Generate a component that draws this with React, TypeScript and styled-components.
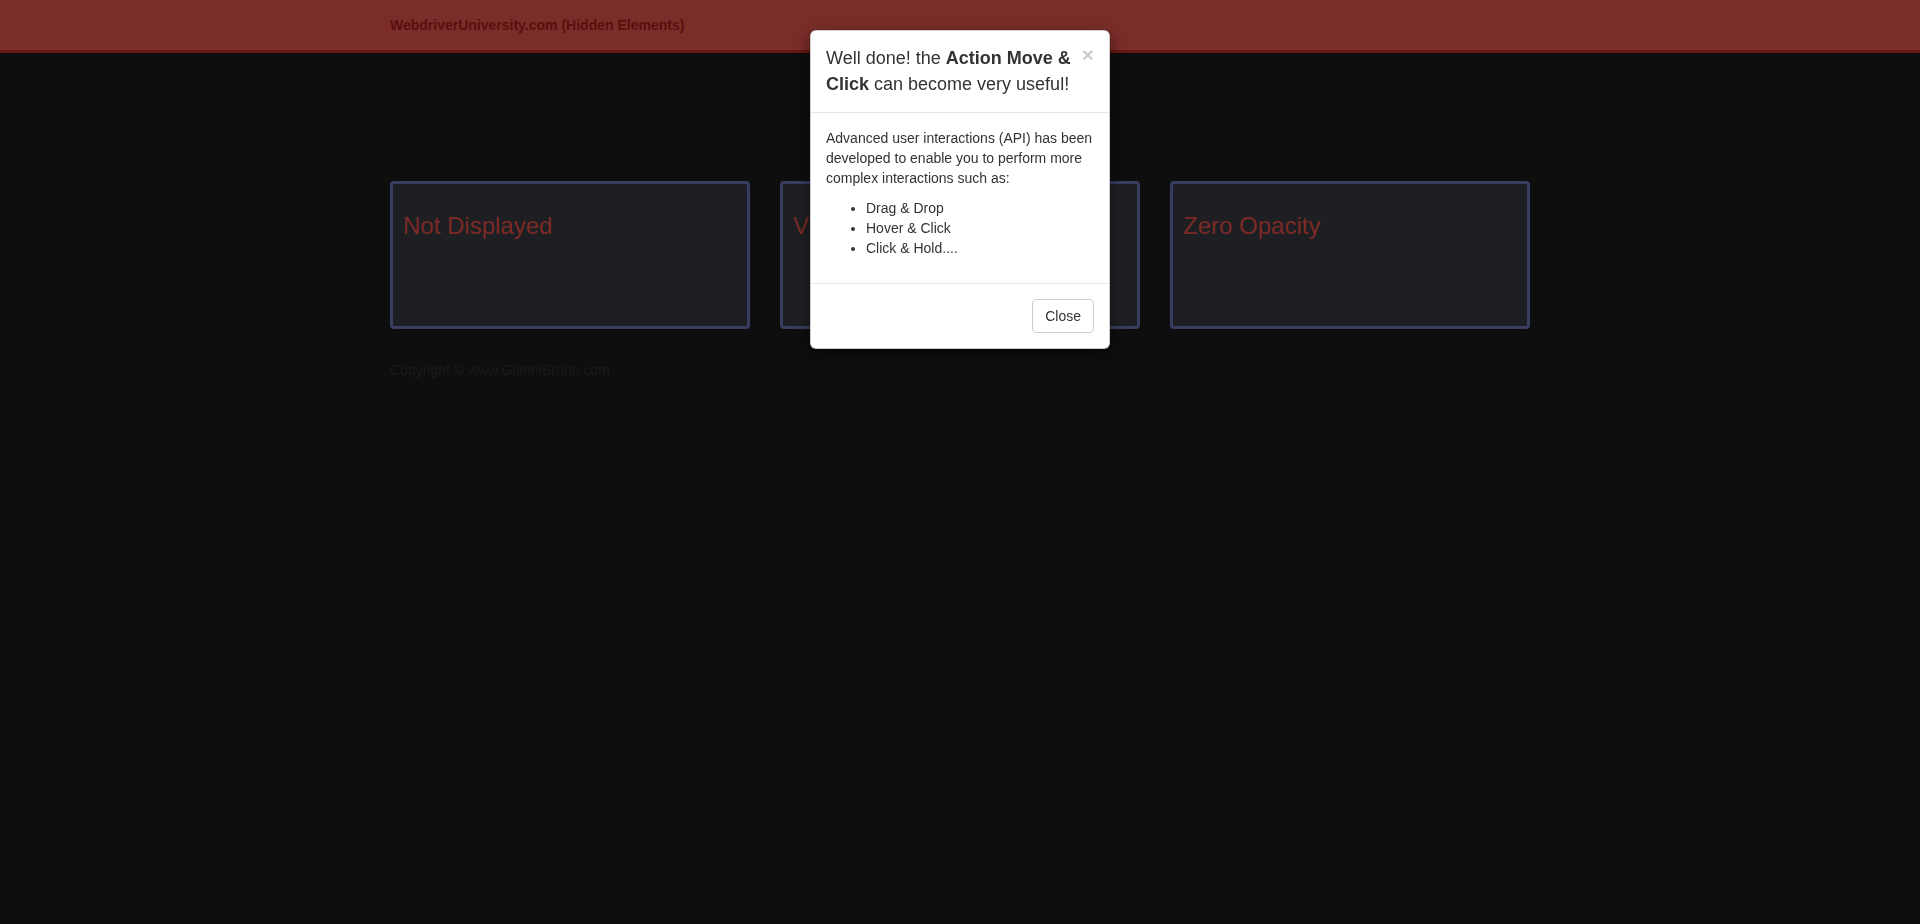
import React from "react";
import styled, { createGlobalStyle } from "styled-components";

const GlobalStyle = createGlobalStyle`
  html, body {
    margin: 0;
    padding: 0;
    background: #0e0e0e;
  }
  body {
    font-family: "Liberation Sans", Arial, Helvetica, sans-serif;
    font-size: 14px;
    line-height: 1.42857143;
    color: #333;
  }
  * { box-sizing: border-box; }
`;

const Navbar = styled.nav`
  height: 53px;
  background: #7b2d29;
  border-bottom: 3px solid #681814;
`;

const Container = styled.div`
  width: 1170px;
  margin: 0 auto;
  padding: 0 15px;
`;

const Brand = styled.a`
  display: block;
  height: 50px;
  line-height: 50px;
  font-size: 14px;
  font-weight: bold;
  color: #5a0f0d;
  text-decoration: none;
`;

const Row = styled.div`
  display: grid;
  grid-template-columns: repeat(3, 1fr);
  margin: 128px -15px 0;
`;

const Col = styled.div`
  padding: 0 15px;
`;

const Card = styled.div`
  height: 148px;
  background: #1e1f22;
  border: 3px solid #383d61;
  border-radius: 4px;
  padding: 9px 10px;
`;

const CardTitle = styled.h3`
  margin: 20px 0 0;
  font-size: 24px;
  font-weight: normal;
  line-height: 1.1;
  color: #7b2a27;
`;

const Footer = styled.p`
  margin: 31px 0 0;
  font-size: 14px;
  line-height: 20px;
  color: #1b1b1b;
`;

const Overlay = styled.div`
  position: fixed;
  inset: 0;
  display: flex;
  justify-content: center;
  align-items: flex-start;
`;

const Modal = styled.div`
  margin-top: 30px;
  width: 300px;
  background: #fff;
  border: 1px solid rgba(0, 0, 0, 0.2);
  border-radius: 6px;
  box-shadow: 0 5px 15px rgba(0, 0, 0, 0.5);
`;

const ModalHeader = styled.div`
  padding: 15px;
  border-bottom: 1px solid #e5e5e5;
  display: flex;
  align-items: flex-start;
  gap: 4px;
`;

const ModalTitle = styled.h4`
  margin: 0;
  flex: 1;
  font-size: 18px;
  font-weight: normal;
  line-height: 1.42857143;
  color: #333;
  b { font-weight: bold; }
`;

const CloseX = styled.button`
  margin-top: -2px;
  padding: 0;
  border: 0;
  background: transparent;
  font-family: "Liberation Sans", Arial, sans-serif;
  font-size: 21px;
  font-weight: bold;
  line-height: 1;
  color: #000;
  opacity: 0.2;
  cursor: pointer;
`;

const ModalBody = styled.div`
  padding: 15px;
  p { margin: 0 0 10px; }
  ul { margin: 0 0 10px; padding-left: 40px; }
`;

const ModalFooter = styled.div`
  padding: 15px;
  border-top: 1px solid #e5e5e5;
  display: flex;
  justify-content: flex-end;
`;

const Button = styled.button`
  font-family: "Liberation Sans", Arial, sans-serif;
  font-size: 14px;
  line-height: 1.42857143;
  padding: 6px 12px;
  color: #333;
  background: #fff;
  border: 1px solid #ccc;
  border-radius: 4px;
  cursor: pointer;
`;

const cards = ["Not Displayed", "Visibility Hidden", "Zero Opacity"];

export default function App() {
  return (
    <>
      <GlobalStyle />
      <Navbar>
        <Container>
          <Brand href="#">WebdriverUniversity.com (Hidden Elements)</Brand>
        </Container>
      </Navbar>
      <Container>
        <Row>
          {cards.map((c) => (
            <Col key={c}>
              <Card>
                <CardTitle>{c}</CardTitle>
              </Card>
            </Col>
          ))}
        </Row>
        <Footer>Copyright © www.GianniBruno.com</Footer>
      </Container>
      <Overlay>
        <Modal>
          <ModalHeader>
            <ModalTitle>
              Well done! the <b>Action Move &amp; Click</b> can become very useful!
            </ModalTitle>
            <CloseX>×</CloseX>
          </ModalHeader>
          <ModalBody>
            <p>
              Advanced user interactions (API) has been developed to enable you to perform more
              complex interactions such as:
            </p>
            <ul>
              <li>Drag &amp; Drop</li>
              <li>Hover &amp; Click</li>
              <li>Click &amp; Hold....</li>
            </ul>
          </ModalBody>
          <ModalFooter>
            <Button>Close</Button>
          </ModalFooter>
        </Modal>
      </Overlay>
    </>
  );
}
